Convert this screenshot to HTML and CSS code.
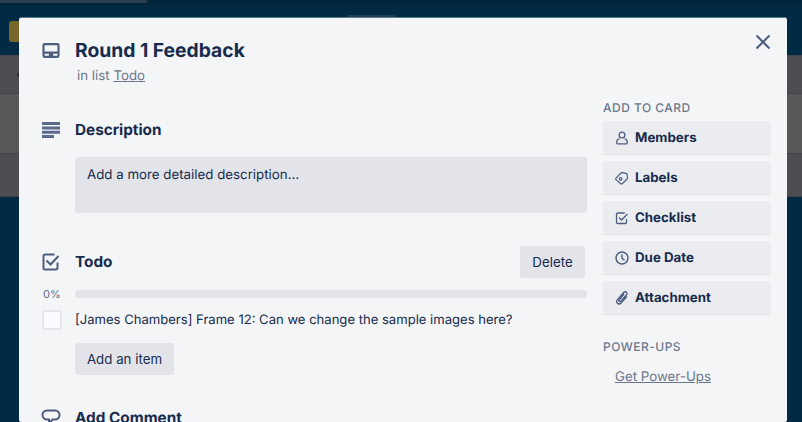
FILE: index.html
```html
<!DOCTYPE html>
<html lang="en">
<head>
    <meta charset="UTF-8">
    <title>Round 1 Feedback</title>
    <link rel="stylesheet" href="styles.css">
</head>
<body>

    <!-- Board behind the modal -->
    <div class="board">
        <div class="board-top"></div>
        <div class="board-tab"></div>
        <div class="board-tab-mid"></div>
        <div class="board-label"></div>
        <div class="board-list">
            <div class="board-row"></div>
            <div class="board-row board-row-light"></div>
            <div class="board-row"></div>
        </div>
        <div class="board-dot"></div>
    </div>

    <!-- Card modal -->
    <div class="modal">
        <button class="close" aria-label="Close">
            <svg width="16" height="16" viewBox="0 0 16 16"><path d="M1.500 1.500l13 13M14.500 1.500l-13 13" fill="none" stroke="#4d5d7e" stroke-width="2"/></svg>
        </button>

        <header class="card-head">
            <div class="gutter gutter-title">
                <svg width="18" height="15" viewBox="1 1 16 14"><path fill-rule="evenodd" fill="#4d5d7e" d="M3 1h12a2 2 0 0 1 2 2v10a2 2 0 0 1-2 2H3a2 2 0 0 1-2-2V3a2 2 0 0 1 2-2zm0 2v6h12V3H3zm0 8v2h4v-2H3zm8 0v2h4v-2h-4z"/></svg>
            </div>
            <div>
                <h1>Round 1 Feedback</h1>
                <p class="in-list">in list <a href="#">Todo</a></p>
            </div>
        </header>

        <div class="columns">
            <main class="main-col">
                <section class="desc">
                    <div class="section-head">
                        <div class="gutter">
                            <svg width="18" height="16" viewBox="0 0 18 16"><path fill="#5a6a8a" d="M0 0h18v3H0zM0 4.400h18v3H0zM0 8.800h18v3H0zM0 13h12v3H0z"/></svg>
                        </div>
                        <h2>Description</h2>
                    </div>
                    <div class="desc-box">Add a more detailed description…</div>
                </section>

                <section class="checklist">
                    <div class="section-head checklist-head">
                        <div class="gutter">
                            <svg width="18" height="18" viewBox="0 0 18 18"><path fill="none" stroke="#4d5d7e" stroke-width="2" d="M15.500 9.500V15a1.500 1.500 0 0 1-1.500 1.500H3A1.500 1.500 0 0 1 1.500 15V3A1.500 1.500 0 0 1 3 1.500h9.500"/><path fill="none" stroke="#4d5d7e" stroke-width="2" d="M4.500 7.500l4 4 8-8.500"/></svg>
                        </div>
                        <h2>Todo</h2>
                        <button class="btn delete">Delete</button>
                    </div>
                    <div class="progress">
                        <span class="percent">0%</span>
                        <div class="progress-bar"></div>
                    </div>
                    <div class="item">
                        <span class="checkbox"></span>
                        <span>[James Chambers] Frame 12: Can we change the sample images here?</span>
                    </div>
                    <button class="btn add-item">Add an item</button>
                </section>

                <section class="comment">
                    <div class="section-head">
                        <div class="gutter">
                            <svg class="comment-icon" width="20" height="18" viewBox="0 0 20 18"><path fill="none" stroke="#4d5d7e" stroke-width="2" d="M6 1.500h8a4.500 4.500 0 0 1 0 9h-2.500L8 14v-3.500H6a4.500 4.500 0 0 1 0-9z"/></svg>
                        </div>
                        <h2>Add Comment</h2>
                    </div>
                </section>
            </main>

            <aside class="side-col">
                <h3>ADD TO CARD</h3>
                <a class="side-btn" href="#">
                    <svg width="14" height="14" viewBox="0 0 14 14"><g fill="none" stroke="#4d5d7e" stroke-width="1.300"><circle cx="7" cy="4" r="2.900"/><path d="M4.500 7.500C3 8 1.700 9.500 1.700 11.200v.5c0 .7.500 1.200 1.200 1.200h8.200c.7 0 1.200-.5 1.200-1.200v-.5c0-1.700-1.300-3.200-2.800-3.700"/></g></svg>
                    Members
                </a>
                <a class="side-btn" href="#">
                    <svg width="14" height="14" viewBox="0 0 14 14"><g fill="none" stroke="#4d5d7e" stroke-width="1.200"><path d="M1 7.200L6 2c.4-.4.900-.5 1.400-.4l3.600.7c.7.100 1.200.7 1.200 1.400l.2 3.200c0 .5-.2 1-.6 1.400l-4.600 4.400c-.4.400-1 .4-1.400 0L1 8.600c-.4-.4-.4-1 0-1.400z"/><circle cx="5.600" cy="7.800" r="1.300"/></g></svg>
                    Labels
                </a>
                <a class="side-btn" href="#">
                    <svg width="14" height="14" viewBox="0 0 14 14"><g fill="none" stroke="#4d5d7e" stroke-width="1.300"><path d="M11.500 8v3.300c0 .7-.5 1.200-1.200 1.200H2.700c-.7 0-1.200-.5-1.200-1.200V3.200c0-.7.500-1.200 1.200-1.200h7"/><path d="M4 6.500l2.500 2.500 6-6"/></g></svg>
                    Checklist
                </a>
                <a class="side-btn" href="#">
                    <svg width="14" height="14" viewBox="0 0 14 14"><g fill="none" stroke="#4d5d7e" stroke-width="1.400"><circle cx="7" cy="7" r="6"/><path d="M7 3.200V7.300l2.500 2"/></g></svg>
                    Due Date
                </a>
                <a class="side-btn" href="#">
                    <svg width="14" height="14" viewBox="0 0 14 14"><path fill="none" stroke="#4d5d7e" stroke-width="1.300" d="M11.800 5.500l-5.500 6.200c-1.200 1.300-2.900 1.500-3.900.6s-.9-2.600.2-3.900l5.800-6.600c.9-1 2.200-1.200 3-.5s.7 2-.2 3L5.700 10.100c-.5.600-1.200.7-1.600.3s-.4-1.100.1-1.700l5-5.700"/></svg>
                    Attachment
                </a>

                <h3 class="powerups-title">POWER-UPS</h3>
                <a class="get-powerups" href="#">Get Power-Ups</a>
            </aside>
        </div>
    </div>

</body>
</html>
```

FILE: styles.css
```css
body {
    margin: 0;
    height: 422px;
    overflow: hidden;
    position: relative;
    background-color: #012b45;
    color: #172b4d;
    font-family: Inter, "Noto Sans", sans-serif;
    font-size: 13.3px;
    text-rendering: geometricPrecision;
}

/* Board behind the modal */
.board {
    position: absolute;
    top: 0;
    left: 0;
    width: 100%;
    height: 100%;
}

.board-top {
    height: 12px;
    background: linear-gradient(#01233a, #012b45);
}

.board-tab {
    position: absolute;
    top: 0;
    left: 0;
    width: 147px;
    height: 3px;
    background-color: #2b3f4e;
}

.board-tab-mid {
    position: absolute;
    top: 15px;
    left: 348px;
    width: 47px;
    height: 3px;
    background-color: #1c4058;
}

.board-label {
    position: absolute;
    top: 21px;
    left: 9px;
    width: 12px;
    height: 21px;
    border-radius: 3px;
    background-color: #75682a;
}

.board-list {
    position: absolute;
    top: 55px;
    left: 0;
    width: 100%;
    height: 142px;
}

.board-row {
    height: 37px;
    background-color: #4c4e51;
    border-top: 1px solid #434548;
}

.board-row-light {
    height: 59px;
    background-color: #58585a;
}

.board-row:last-child {
    height: 42px;
    border-bottom: 1px solid #3c4044;
}

.board-dot {
    position: absolute;
    top: 73px;
    left: 17px;
    width: 3px;
    height: 4px;
    background-color: #2e3033;
}

/* Card modal */
.modal {
    position: relative;
    box-sizing: border-box;
    width: 768px;
    height: 404px;
    margin-left: 19px;
    top: 18px;
    padding: 20px 16px 0 23px;
    background-color: #f4f5f7;
    border-radius: 2px;
    box-shadow: 0 -1px 0 #5c7a8c;
    overflow: hidden;
}

.close {
    position: absolute;
    top: 16px;
    right: 16px;
    width: 16px;
    height: 16px;
    padding: 0;
    border: none;
    background: none;
    display: flex;
}

.card-head {
    display: flex;
}

.gutter {
    width: 33px;
    flex-shrink: 0;
    display: flex;
    align-items: center;
}

.gutter-title {
    height: 24px;
}

h1 {
    margin: 0;
    font-size: 19.300px;
    line-height: 24px;
    font-weight: 700;
}

.in-list {
    margin: 4px 0 0 2px;
    line-height: 20px;
    color: #6b778c;
}

.in-list a {
    color: #6b778c;
}

.columns {
    display: flex;
    margin-top: 12px;
}

.main-col {
    width: 545px;
}

.section-head {
    display: flex;
    align-items: center;
    height: 20px;
}

h2 {
    margin: 0;
    font-size: 15.300px;
    line-height: 20px;
    font-weight: 700;
}

.desc {
    padding-top: 22px;
}

.desc-box {
    box-sizing: border-box;
    height: 56px;
    margin: 17px 0 0 33px;
    padding: 8px 12px;
    line-height: 20px;
    background-color: #e2e4ea;
    border-radius: 3px;
}

.checklist {
    margin-top: 33px;
}

.checklist-head {
    height: 32px;
}

.btn {
    height: 32px;
    padding: 0;
    border: none;
    border-radius: 3px;
    background-color: #e2e4ea;
    color: #172b4d;
    font-family: inherit;
    font-size: 13.300px;
}

.delete {
    margin-left: auto;
    margin-right: 2px;
    width: 65px;
}

.progress {
    display: flex;
    align-items: center;
    margin-top: 10px;
    height: 12px;
}

.percent {
    width: 33px;
    padding-left: 1px;
    box-sizing: border-box;
    font-size: 11px;
    color: #5e6c84;
}

.progress-bar {
    flex: 1;
    height: 8px;
    border-radius: 4px;
    background-color: #e2e4ea;
}

.item {
    display: flex;
    align-items: center;
    height: 20px;
    margin-top: 10px;
    line-height: 20px;
    font-size: 13.070px;
}

.checkbox {
    box-sizing: border-box;
    width: 20px;
    height: 20px;
    margin-right: 13px;
    background-color: #fafbfc;
    border: 2px solid #e4e6eb;
    border-radius: 3px;
}

.add-item {
    display: block;
    margin: 13px 0 0 33px;
    width: 99px;
}

.comment {
    margin-top: 33px;
}

.comment-icon {
    margin-left: -1px;
}

.side-col {
    margin-left: 16px;
    width: 168px;
    padding-top: 2px;
}

h3 {
    margin: 0 0 5px;
    font-size: 12px;
    line-height: 16px;
    font-weight: 500;
    letter-spacing: 0.04em;
    color: #6b778c;
}

.side-btn {
    display: flex;
    align-items: center;
    box-sizing: border-box;
    height: 33px;
    margin-bottom: 7px;
    padding-left: 12px;
    gap: 6px;
    background-color: #ebecf0;
    border-radius: 3px;
    box-shadow: 0 1px 0 #dfe1e6;
    color: #172b4d;
    font-weight: 700;
    text-decoration: none;
}

.powerups-title {
    margin: 25px 0 0;
}

.get-powerups {
    display: block;
    margin: 12px 0 0 12px;
    line-height: 20px;
    color: #6b778c;
}
```
